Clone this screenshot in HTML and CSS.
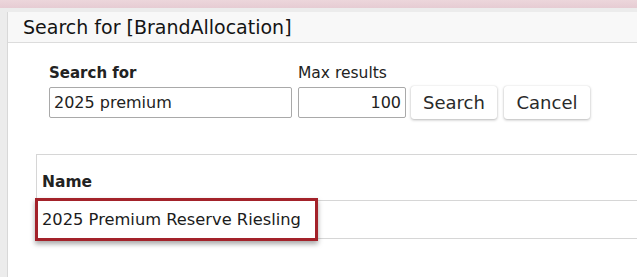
FILE: index.html
```html
<!DOCTYPE html>
<html lang="en">
<head>
<meta charset="utf-8">
<title>Search for [BrandAllocation]</title>
<link rel="stylesheet" href="styles.css">
</head>
<body>
<div class="topband"></div>
<div class="stage">
  <div class="dialog">
    <div class="dialog-header">Search for [BrandAllocation]</div>
    <div class="dialog-body">
      <div class="form-row">
        <div class="field field-query">
          <label class="label label-bold">Search for</label>
          <input class="input" type="text" value="2025 premium">
        </div>
        <div class="field field-max">
          <label class="label">Max results</label>
          <input class="input input-num" type="text" value="100">
        </div>
        <button class="btn">Search</button>
        <button class="btn">Cancel</button>
      </div>
      <div class="results">
        <table class="grid">
          <thead>
            <tr><th>Name</th></tr>
          </thead>
          <tbody>
            <tr><td>2025 Premium Reserve Riesling</td></tr>
          </tbody>
        </table>
        <div class="highlight"></div>
      </div>
    </div>
  </div>
</div>
</body>
</html>
```

FILE: styles.css
```css
html, body {
  margin: 0;
  padding: 0;
}
body {
  width: 637px;
  height: 277px;
  overflow: hidden;
  background: #e4e4e4;
  font-family: "DejaVu Sans", "Liberation Sans", sans-serif;
  color: #1e1e1e;
}
.topband {
  height: 8px;
  background: linear-gradient(#ecd6db, #e6ccd3);
}
.stage {
  display: flex;
  padding-top: 4px;
  padding-left: 8px;
  background: #ececec;
  height: 265px;
}
.dialog {
  flex: 1;
  min-width: 0;
  background: #ffffff;
  box-shadow: -1px 0 0 #d8d8d8;
}
.dialog-header {
  height: 31px;
  box-sizing: border-box;
  padding-left: 15px;
  background: #f8f8f8;
  border-bottom: 1px solid #dcdcdc;
  font-size: 19px;
  line-height: 30px;
  color: #141414;
}
.dialog-body {
  padding-top: 20px;
  padding-left: 28px;
}
.form-row {
  display: flex;
  align-items: flex-end;
  padding-left: 13px;
}
.field {
  display: flex;
  flex-direction: column;
  gap: 4px;
}
.field-query {
  width: 243px;
  margin-right: 6px;
}
.field-max {
  width: 108px;
  margin-right: 5px;
}
.label {
  font-size: 15px;
  line-height: 20px;
  color: #222;
}
.label-bold {
  font-weight: bold;
}
.field-max .label {
  font-size: 15.5px;
}
.input {
  box-sizing: border-box;
  height: 31px;
  width: 100%;
  margin: 0;
  padding: 0 4px;
  border: 1px solid #a9a9a9;
  border-radius: 2px;
  font-family: inherit;
  font-size: 16px;
  color: #222;
  background: #fff;
  outline: none;
}
.input-num {
  text-align: right;
}
.btn {
  box-sizing: border-box;
  height: 33px;
  width: 86px;
  margin: 0 7px 0 0;
  padding: 0;
  border: none;
  border-radius: 3px;
  background: #fff;
  box-shadow: 0 1px 3px rgba(0, 0, 0, 0.28), 0 0 1px rgba(0, 0, 0, 0.15);
  font-family: inherit;
  font-size: 18px;
  color: #2a2a2a;
  position: relative;
  top: 1px;
}
.results {
  position: relative;
  margin-top: 36px;
}
.grid {
  width: 100%;
  border-collapse: collapse;
  border-top: 1px solid #d6d6d6;
  border-left: 1px solid #d6d6d6;
}
.grid th,
.grid td {
  text-align: left;
  padding: 0 0 0 5px;
  border-bottom: 1px solid #d6d6d6;
}
.grid th {
  height: 46px;
  padding-top: 9px;
  box-sizing: border-box;
  font-size: 15.5px;
  font-weight: bold;
  color: #222;
}
.grid td {
  height: 38px;
  box-sizing: border-box;
  font-size: 16.3px;
  color: #1c1c1c;
}
.highlight {
  position: absolute;
  left: -1px;
  top: 44px;
  width: 283px;
  height: 43px;
  box-sizing: border-box;
  border: 3px solid #a3222a;
  box-shadow: 0 3px 5px rgba(0, 0, 0, 0.35);
  pointer-events: none;
}
```
